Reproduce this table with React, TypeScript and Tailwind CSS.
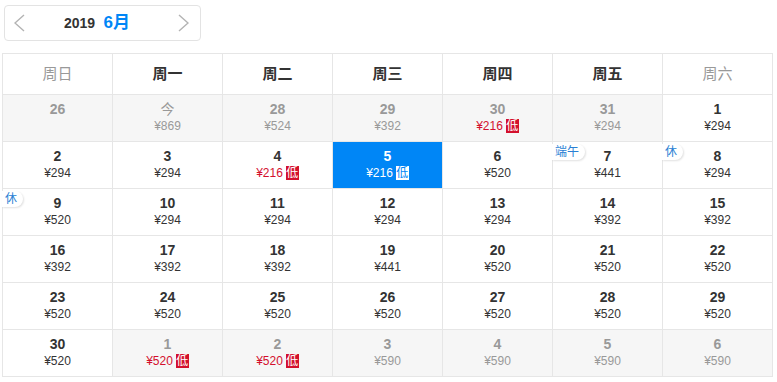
type Day = {
  d: string
  p?: string
  other?: boolean
  low?: boolean
  sel?: boolean
  tag?: string
}

const weeks = ['周日', '周一', '周二', '周三', '周四', '周五', '周六']

const rows: Day[][] = [
  [
    { d: '26', other: true },
    { d: '今', p: '¥869', other: true },
    { d: '28', p: '¥524', other: true },
    { d: '29', p: '¥392', other: true },
    { d: '30', p: '¥216', other: true, low: true },
    { d: '31', p: '¥294', other: true },
    { d: '1', p: '¥294' },
  ],
  [
    { d: '2', p: '¥294' },
    { d: '3', p: '¥294' },
    { d: '4', p: '¥216', low: true },
    { d: '5', p: '¥216', low: true, sel: true },
    { d: '6', p: '¥520' },
    { d: '7', p: '¥441', tag: '端午' },
    { d: '8', p: '¥294', tag: '休' },
  ],
  [
    { d: '9', p: '¥520', tag: '休' },
    { d: '10', p: '¥294' },
    { d: '11', p: '¥294' },
    { d: '12', p: '¥294' },
    { d: '13', p: '¥294' },
    { d: '14', p: '¥392' },
    { d: '15', p: '¥392' },
  ],
  [
    { d: '16', p: '¥392' },
    { d: '17', p: '¥392' },
    { d: '18', p: '¥392' },
    { d: '19', p: '¥441' },
    { d: '20', p: '¥520' },
    { d: '21', p: '¥520' },
    { d: '22', p: '¥520' },
  ],
  [
    { d: '23', p: '¥520' },
    { d: '24', p: '¥520' },
    { d: '25', p: '¥520' },
    { d: '26', p: '¥520' },
    { d: '27', p: '¥520' },
    { d: '28', p: '¥520' },
    { d: '29', p: '¥520' },
  ],
  [
    { d: '30', p: '¥520' },
    { d: '1', p: '¥520', other: true, low: true },
    { d: '2', p: '¥520', other: true, low: true },
    { d: '3', p: '¥590', other: true },
    { d: '4', p: '¥590', other: true },
    { d: '5', p: '¥590', other: true },
    { d: '6', p: '¥590', other: true },
  ],
]

function Chevron({ right }: { right?: boolean }) {
  return (
    <svg width="11" height="18" viewBox="0 0 11 18" fill="none" stroke="#b3b3b3" strokeWidth="1.4">
      <polyline points={right ? '1,1 10,9 1,17' : '10,1 1,9 10,17'} />
    </svg>
  )
}

function Cell({ day }: { day: Day }) {
  const bg = day.sel ? 'bg-[#0086f6]' : day.other ? 'bg-[#f6f6f6]' : 'bg-white'
  const numColor = day.sel ? 'text-white' : day.other ? 'text-[#999]' : 'text-[#333]'
  const priceColor = day.sel
    ? 'text-white'
    : day.low
      ? 'text-[#d3102d]'
      : day.other
        ? 'text-[#999]'
        : 'text-[#333]'
  return (
    <div className={`relative flex h-[47px] w-[110px] flex-col items-center border-r border-b border-[#e6e6e6] pt-[5px] ${bg}`}>
      {day.tag && (
        <span className="absolute top-[2px] -left-px rounded-r-[8px] bg-white pr-[6px] pl-[3px] text-[12px] leading-[16px] text-[#2a7fd4] shadow-[1px_1px_2px_rgba(0,0,0,0.12)]">
          {day.tag}
        </span>
      )}
      <span className={`text-[14px] leading-[18px] ${day.d === '今' ? 'font-normal' : 'font-bold'} ${numColor}`}>
        {day.d}
      </span>
      {day.p && (
        <span className={`flex items-center text-[12px] leading-[16px] ${priceColor}`}>
          {day.p}
          {day.low && (
            <span
              className={`ml-[3px] inline-flex h-[14px] w-[13px] items-center justify-center text-[12px] leading-none ${
                day.sel ? 'bg-white text-[#0086f6]' : 'bg-[#d3102d] text-white'
              }`}
            >
              低
            </span>
          )}
        </span>
      )}
    </div>
  )
}

export default function App() {
  return (
    <div className="h-[382px] w-[777px] overflow-hidden bg-white pt-[5px] font-['Liberation_Sans','Noto_Sans_CJK_SC',sans-serif]">
      <div className="ml-[4px] flex h-[36px] w-[197px] items-center rounded-[4px] border border-[#e3e3e3] pl-[9px]">
        <Chevron />
        <div className="ml-[39px] flex w-[66px] items-baseline justify-between">
          <span className="text-[14px] font-bold text-[#333]">2019</span>
          <span className="text-[17px] font-bold text-[#0086f6]">6月</span>
        </div>
        <div className="ml-[48px]">
          <Chevron right />
        </div>
      </div>
      <div className="mt-[12px] ml-[2px] w-[771px] border-t border-l border-[#e6e6e6]">
        <div className="flex">
          {weeks.map((w, i) => (
            <div
              key={w}
              className={`flex h-[41px] w-[110px] items-center justify-center border-r border-b border-[#e6e6e6] text-[15px] ${
                i === 0 || i === 6 ? 'text-[#999]' : 'font-bold text-[#333]'
              }`}
            >
              {w}
            </div>
          ))}
        </div>
        {rows.map((r, ri) => (
          <div key={ri} className="flex">
            {r.map((day, di) => (
              <Cell key={di} day={day} />
            ))}
          </div>
        ))}
      </div>
    </div>
  )
}
